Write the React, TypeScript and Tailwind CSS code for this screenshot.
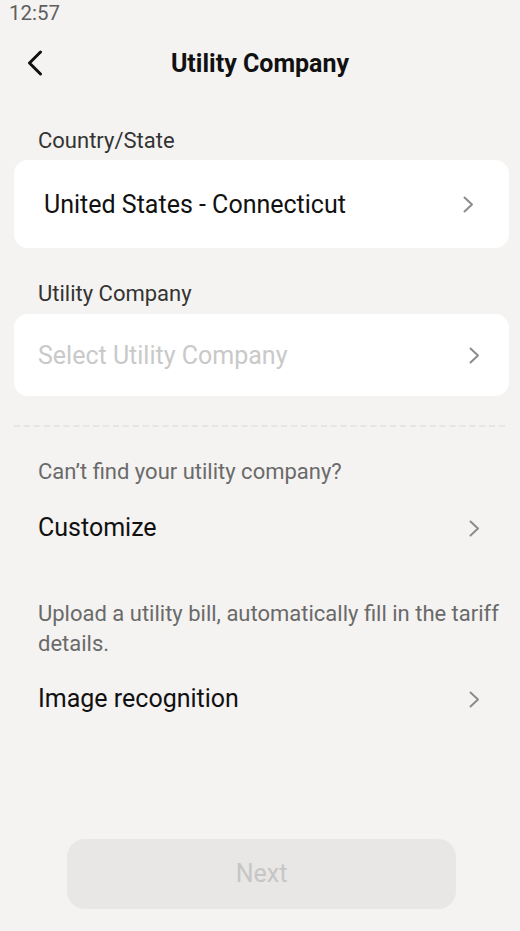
import React from 'react';

const Chevron = ({ className = '' }: { className?: string }) => (
  <svg width="11" height="17" viewBox="0 0 11 17" fill="none" className={className}>
    <polyline points="1.5,1.5 9,8.5 1.5,15.5" stroke="#8c8c8c" strokeWidth="2" strokeLinecap="round" strokeLinejoin="round" />
  </svg>
);

const BackArrow = () => (
  <svg width="18" height="26" viewBox="0 0 18 26" fill="none">
    <polyline points="14.5,2 3.5,13 14.5,24" stroke="#111111" strokeWidth="3" strokeLinecap="round" strokeLinejoin="round" />
  </svg>
);

const App = () => {
  return (
    <div className="flex flex-col h-[931px] bg-[#f4f3f1] font-['Roboto',sans-serif] overflow-hidden">
      <div className="h-[28px] pl-[9px] text-[20.5px] leading-[26px] text-[#5f5f5f]">12:57</div>

      <div className="relative flex items-center justify-center h-[70px]">
        <button className="absolute left-[26px] top-[22px]">
          <BackArrow />
        </button>
        <h1 className="text-[25px] leading-[32px] mt-[2px] font-bold text-[#111]">Utility Company</h1>
      </div>

      <div className="mt-[31px] pl-[38px] text-[22px] leading-[24px] text-[#333]">Country/State</div>
      <div className="mt-[7px] ml-[14px] mr-[11px] h-[88px] bg-white rounded-[14px] flex items-center justify-between pl-[30px] pr-[35px]">
        <span className="text-[25px] leading-[32px] pt-[2px] text-[#111]">United States - Connecticut</span>
        <Chevron />
      </div>

      <div className="mt-[34px] pl-[38px] text-[22px] leading-[24px] text-[#333]">Utility Company</div>
      <div className="mt-[8px] ml-[14px] mr-[11px] h-[82px] bg-white rounded-[14px] flex items-center justify-between pl-[24px] pr-[29px]">
        <span className="text-[25px] leading-[32px] pt-[2px] text-[#c9c9c9]">Select Utility Company</span>
        <Chevron />
      </div>

      <div className="mt-[29px] ml-[14px] mr-[15px] border-t-2 border-dashed border-[#e6e5e3]" />

      <div className="mt-[33px] pl-[38px] text-[22px] leading-[24px] text-[#6a6a6a]">Can’t find your utility company?</div>
      <div className="mt-[29px] pl-[38px] pr-[40px] flex items-center justify-between h-[30px]">
        <span className="text-[25px] text-[#111]">Customize</span>
        <Chevron />
      </div>

      <p className="mt-[56px] pl-[38px] pr-[14px] text-[22px] leading-[30px] text-[#6a6a6a]">
        Upload a utility bill, automatically fill in the tariff details.
      </p>
      <div className="mt-[25px] pl-[38px] pr-[40px] flex items-center justify-between h-[30px]">
        <span className="text-[25px] text-[#111]">Image recognition</span>
        <Chevron />
      </div>

      <button className="mt-auto mb-[22px] ml-[67px] w-[389px] h-[70px] rounded-[18px] bg-[#e8e7e5] text-[25px] text-[#c6c6c6]">
        Next
      </button>
    </div>
  );
};

export default App;
